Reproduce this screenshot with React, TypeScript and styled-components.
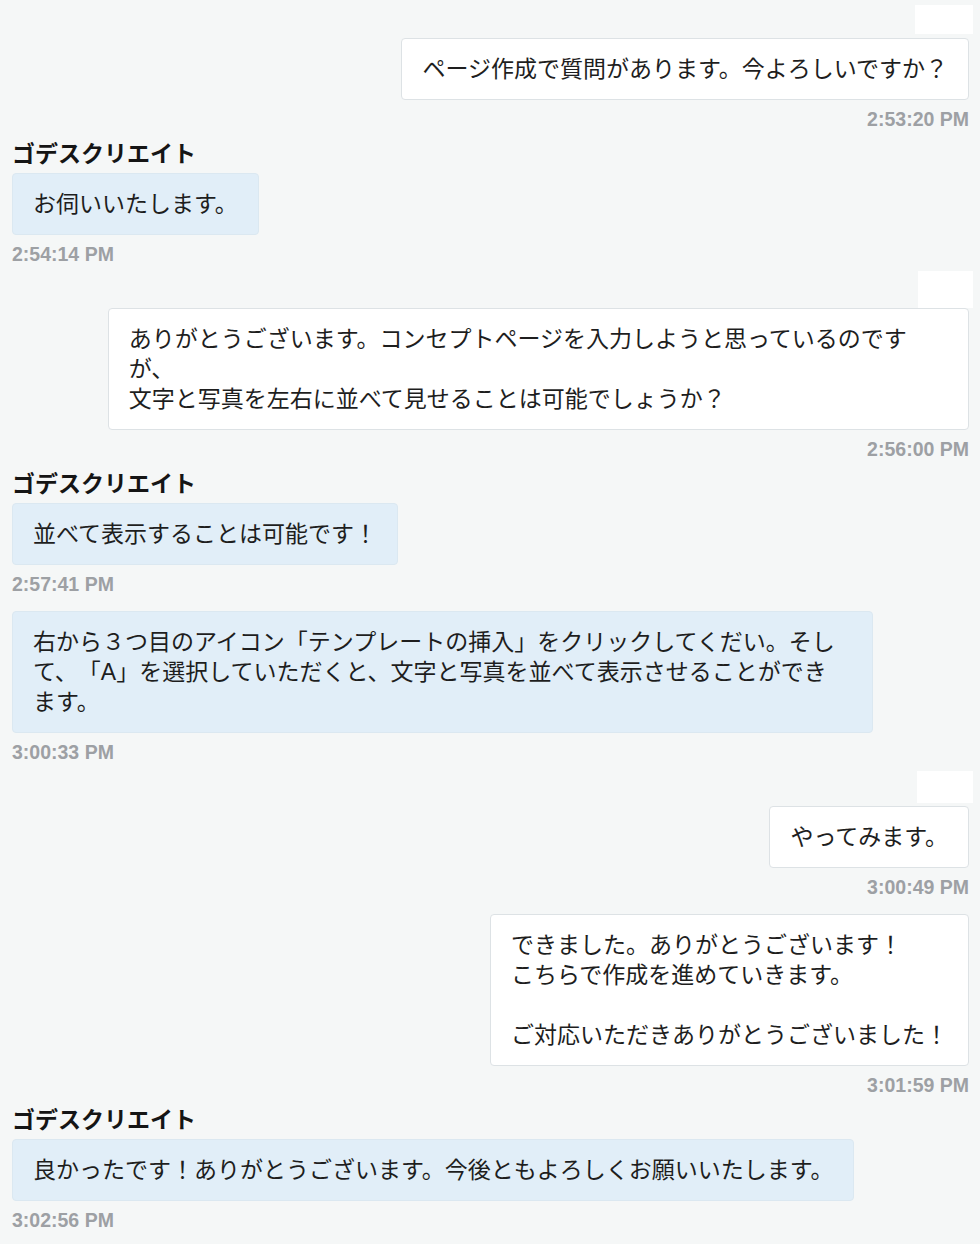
import React from "react";
import styled, { createGlobalStyle } from "styled-components";

const GlobalStyle = createGlobalStyle`
  html, body {
    margin: 0;
    padding: 0;
    background: #f5f7f7;
  }
  body {
    font-family: "Liberation Sans", "Noto Sans CJK JP", sans-serif;
    -webkit-font-smoothing: antialiased;
  }
`;

type Side = "left" | "right";

const Page = styled.div`
  box-sizing: border-box;
  min-height: 1244px;
  padding: 4px 11px 12px 12px;
  display: flex;
  flex-direction: column;
  background: #f5f7f7;
`;

const Group = styled.div<{ $side: Side; $cont?: boolean }>`
  display: flex;
  flex-direction: column;
  align-items: ${(p) => (p.$side === "right" ? "flex-end" : "flex-start")};
  margin-top: ${(p) => (p.$cont ? "15px" : "8px")};
  &:first-child {
    margin-top: 0;
  }
`;

const Header = styled.div`
  height: 30px;
  margin-bottom: 4px;
  display: flex;
  align-items: center;
`;

const Name = styled.div`
  font-family: "Liberation Sans", "Noto Sans CJK JP", sans-serif;
  font-size: 23px;
  line-height: 30px;
  font-weight: 700;
  color: #151515;
`;

const Redaction = styled.div<{ $w: number; $h: number }>`
  width: ${(p) => p.$w}px;
  height: ${(p) => p.$h}px;
  background: #ffffff;
  margin-right: -4px;
  flex: none;
`;

const Bubble = styled.div<{ $side: Side; $wide?: boolean }>`
  box-sizing: border-box;
  max-width: 90%;
  width: ${(p) => (p.$wide ? "90%" : "auto")};
  padding: 15px 20px;
  border: 1px solid
    ${(p) => (p.$side === "right" ? "#dde2e5" : "#dbe8f1")};
  border-radius: 4px;
  background: ${(p) => (p.$side === "right" ? "#ffffff" : "#e1eef8")};
  color: #1e1e1e;
  font-size: 23px;
  line-height: 30px;
  white-space: pre-wrap;
  text-spacing-trim: space-all;
`;

const Time = styled.div`
  margin-top: 7px;
  font-family: "Liberation Sans", Arial, sans-serif;
  font-size: 19.5px;
  line-height: 24px;
  font-weight: 700;
  color: #9da0a4;
`;

type Msg = {
  side: Side;
  text: string;
  time: string;
  name?: string;
  redact?: [number, number];
  cont?: boolean;
  wide?: boolean;
};

const messages: Msg[] = [
  {
    side: "right",
    redact: [58, 29],
    text: "ページ作成で質問があります。今よろしいですか？",
    time: "2:53:20 PM",
  },
  {
    side: "left",
    name: "ゴデスクリエイト",
    text: "お伺いいたします。",
    time: "2:54:14 PM",
  },
  {
    side: "right",
    redact: [55, 37],
    wide: true,
    text:
      "ありがとうございます。コンセプトページを入力しようと思っているのです\nが、\n文字と写真を左右に並べて見せることは可能でしょうか？",
    time: "2:56:00 PM",
  },
  {
    side: "left",
    name: "ゴデスクリエイト",
    text: "並べて表示することは可能です！",
    time: "2:57:41 PM",
  },
  {
    side: "left",
    cont: true,
    wide: true,
    text:
      "右から３つ目のアイコン「テンプレートの挿入」をクリックしてくだい。そし\nて、「A」を選択していただくと、文字と写真を並べて表示させることができ\nます。",
    time: "3:00:33 PM",
  },
  {
    side: "right",
    redact: [56, 32],
    text: "やってみます。",
    time: "3:00:49 PM",
  },
  {
    side: "right",
    cont: true,
    text:
      "できました。ありがとうございます！\nこちらで作成を進めていきます。\n\nご対応いただきありがとうございました！",
    time: "3:01:59 PM",
  },
  {
    side: "left",
    name: "ゴデスクリエイト",
    text: "良かったです！ありがとうございます。今後ともよろしくお願いいたします。",
    time: "3:02:56 PM",
  },
];

export default function App() {
  return (
    <>
      <GlobalStyle />
      <Page>
        {messages.map((m, i) => (
          <Group key={i} $side={m.side} $cont={m.cont}>
            {!m.cont && (
              <Header>
                {m.name ? (
                  <Name>{m.name}</Name>
                ) : m.redact ? (
                  <Redaction $w={m.redact[0]} $h={m.redact[1]} />
                ) : null}
              </Header>
            )}
            <Bubble $side={m.side} $wide={m.wide}>
              {m.text}
            </Bubble>
            <Time>{m.time}</Time>
          </Group>
        ))}
      </Page>
    </>
  );
}
